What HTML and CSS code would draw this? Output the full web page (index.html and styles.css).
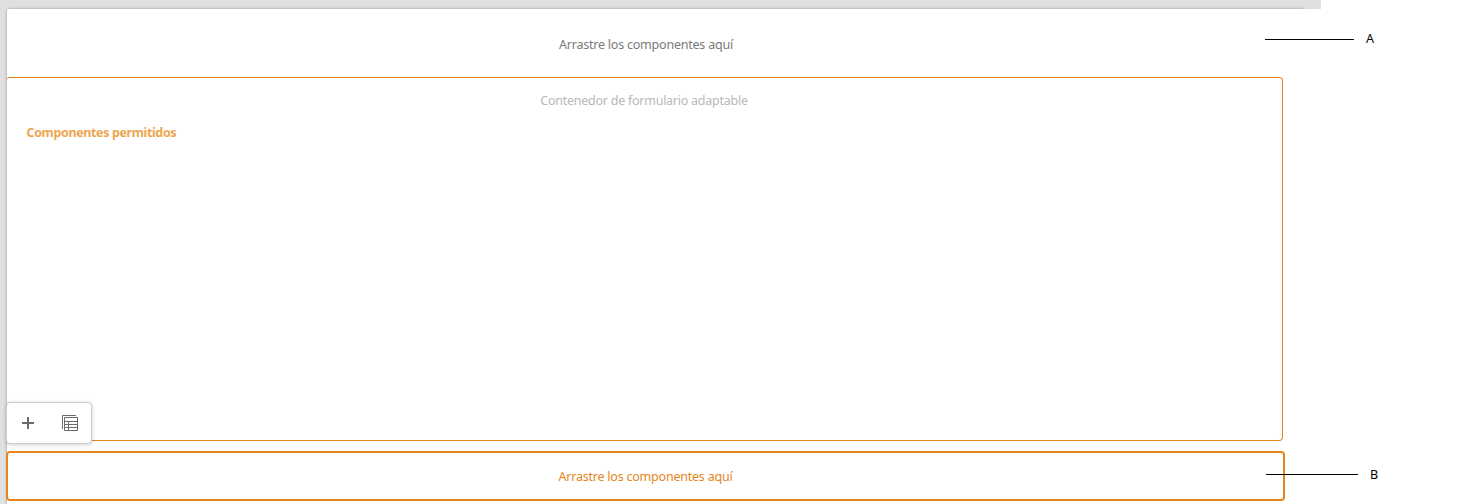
FILE: index.html
```
<!DOCTYPE html>
<html lang="es">
<head>
<meta charset="utf-8">
<title>Editor de plantillas</title>
<link rel="stylesheet" href="styles.css">
</head>
<body>
<div class="topbar"></div>
<div class="workspace">
  <div class="gutter"></div>
  <main class="page">
    <section class="drop drop-header"><span class="drop-text">Arrastre los componentes aquí</span></section>
    <section class="container">
      <p class="container-title"><span>Contenedor de formulario adaptable</span></p>
      <p class="allowed">Componentes permitidos</p>
      <div class="toolbar">
        <button class="tool" aria-label="Agregar">
          <svg width="12" height="12" viewBox="0 0 12 12"><path d="M0 6H12M6 0V12" stroke="#6b6b6b" stroke-width="2"/></svg>
        </button>
        <button class="tool" aria-label="Directiva">
          <svg width="16" height="16" viewBox="0 0 16 16" fill="none" stroke="#6b6b6b"><path d="M.5 14V.5H14M2.5 2.5H15.500V15.500H2.500ZM2.500 6.500H15.500M2.500 9.500H15.500M2.500 12.500H15.500M6.500 6.500V15.500"/></svg>
        </button>
      </div>
    </section>
    <section class="drop drop-footer"><span class="drop-text">Arrastre los componentes aquí</span></section>
  </main>
</div>
<div class="callout callout-a"><i class="leader"></i><span>A</span></div>
<div class="callout callout-b"><i class="leader"></i><span>B</span></div>
</body>
</html>
```
FILE: styles.css
```
* { box-sizing: border-box; }
body {
  margin: 0;
  height: 504px;
  overflow: hidden;
  position: relative;
  background: #fff;
  font: 12.5px/18px "Noto Sans", sans-serif;
}
p { margin: 0; }
.topbar {
  width: 1321px;
  height: 9px;
  background: #e0e0e0;
}
.workspace {
  display: flex;
  height: 495px;
}
.gutter {
  width: 7px;
  background: #e0e0e0;
}
.page {
  width: 1298px;
  background: #fff;
  border-top-left-radius: 3px;
  box-shadow: 0 0 3px rgba(0, 0, 0, .35);
  clip-path: inset(-3px 0 0 -4px);
}
.drop {
  display: flex;
  align-items: center;
  justify-content: center;
}
.drop-header {
  width: 1278px;
  height: 68px;
  padding-top: 4px;
  color: #7a7a7a;
}
.drop-text { letter-spacing: -.22px; }
.container {
  position: relative;
  width: 1277px;
  height: 364px;
  margin-left: -1px;
  border: 1px solid #e68619;
  border-left: 0;
  border-radius: 4px;
  padding-top: 14px;
}
.container-title {
  text-align: center;
  color: #b8b8b8;
  letter-spacing: -.25px;
}
.allowed {
  margin: 14px 0 0 20.500px;
  color: #eda64f;
  font-weight: 700;
  letter-spacing: -.37px;
}
.toolbar {
  position: absolute;
  left: 0;
  bottom: -4px;
  display: flex;
  width: 86px;
  height: 42px;
  background: #fff;
  border: 1px solid #ccc;
  border-radius: 4px;
  box-shadow: 0 1px 4px rgba(0, 0, 0, .18);
}
.tool {
  display: flex;
  align-items: center;
  justify-content: center;
  width: 42px;
  height: 40px;
  padding: 0;
  border: 0;
  background: none;
}
.drop-footer {
  width: 1279px;
  height: 50px;
  margin: 10px 0 0 -1px;
  padding-top: 2px;
  border: 2px solid #e68619;
  border-radius: 4px;
  color: #e68619;
}
.callout {
  position: absolute;
  display: flex;
  align-items: center;
  height: 16px;
  color: #000;
  font-size: 12.5px;
  line-height: 16px;
}
.leader {
  height: 1px;
  background: #000;
}
.callout-a { left: 1265px; top: 31px; }
.callout-a .leader { width: 89px; margin-right: 12px; }
.callout-b { left: 1266px; top: 467px; }
.callout-b .leader { width: 92px; margin: 0 12px 1px 0; }
```
